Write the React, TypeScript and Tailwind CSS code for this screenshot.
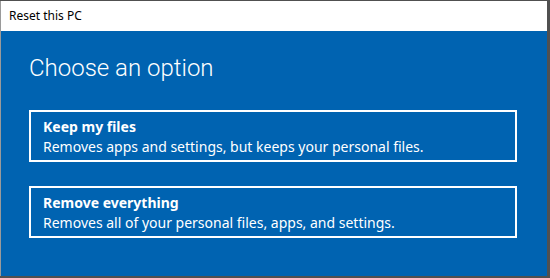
export default function App() {
  const options = [
    { title: 'Keep my files', desc: 'Removes apps and settings, but keeps your personal files.' },
    { title: 'Remove everything', desc: 'Removes all of your personal files, apps, and settings.' },
  ];

  return (
    <div className="w-[550px] h-[278px] bg-[#505050] pt-px font-['Noto_Sans',sans-serif]">
      <div className="w-[547px] h-[275px] flex flex-col border-l border-[#9a9a9a] bg-[#0063b1]">
        <div className="h-[30px] bg-white flex items-center pl-2 text-[12px] text-black">Reset this PC</div>
        <div className="flex-1 px-7 pt-[21px]">
          <h1 className="font-['Roboto',sans-serif] text-[24px] leading-[32px] text-white font-light mb-[26px]">
            Choose an option
          </h1>
          <div className="flex flex-col gap-6 w-[488px]">
            {options.map((o) => (
              <button
                key={o.title}
                className="h-[52px] border-2 border-white text-left px-3 pt-px flex flex-col justify-center text-white"
              >
                <span className="text-[14px] font-bold leading-[20px]">{o.title}</span>
                <span className="text-[14px] leading-[20px]">{o.desc}</span>
              </button>
            ))}
          </div>
        </div>
      </div>
    </div>
  );
}
